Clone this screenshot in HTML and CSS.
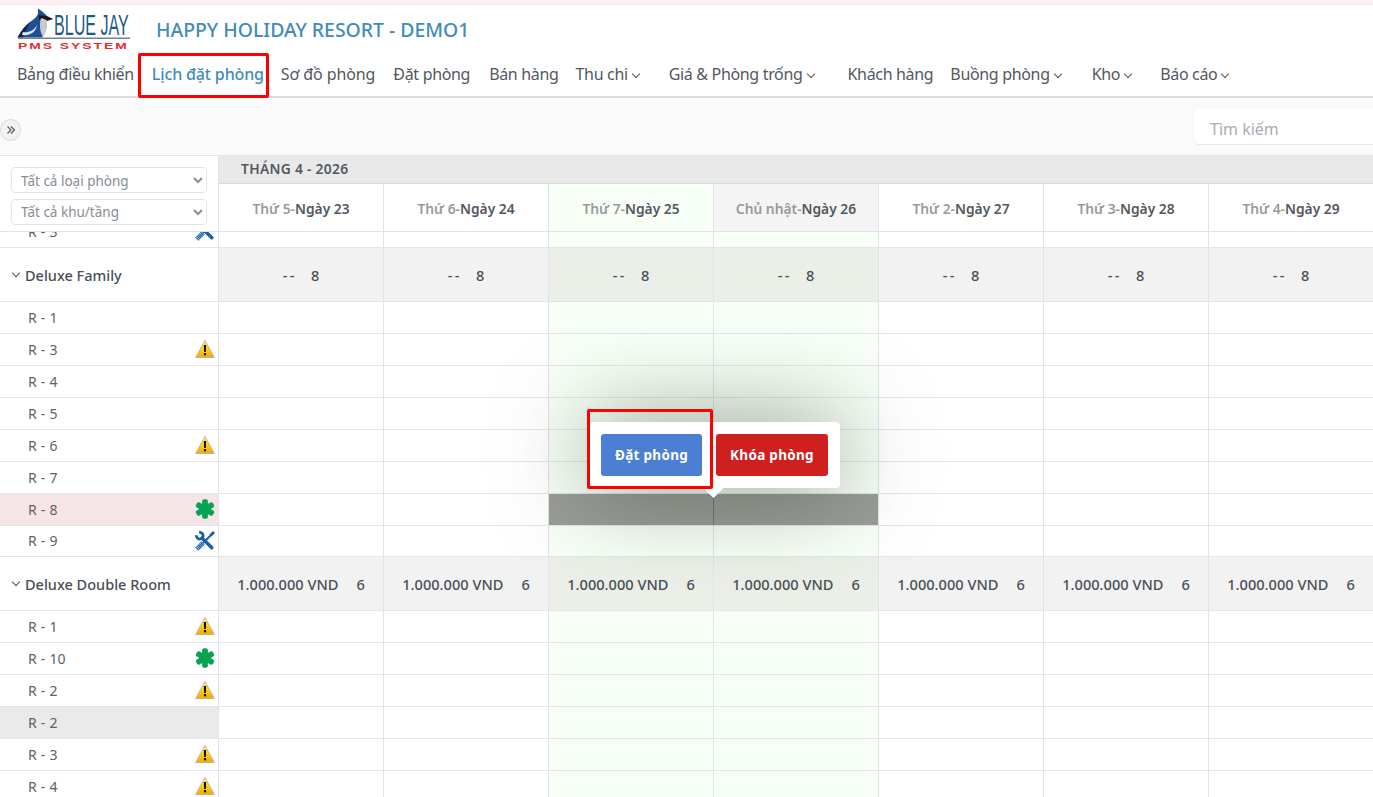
FILE: index.html
```html
<!DOCTYPE html>
<html lang="vi">
<head>
<meta charset="utf-8">
<title>Lịch đặt phòng</title>
<link rel="stylesheet" href="styles.css">
</head>
<body>
<svg class="defs" width="0" height="0" aria-hidden="true">
  <defs>
    <linearGradient id="warnFill" x1="0" y1="0" x2="0" y2="1">
      <stop offset="0" stop-color="#fbf3c8"/><stop offset=".4" stop-color="#ffd81e"/><stop offset="1" stop-color="#f5a800"/>
    </linearGradient>
    <symbol id="warn" viewBox="0 0 20 20">
      <path d="M10 1.500 L19.300 18.500 H.7 Z" fill="url(#warnFill)" stroke="#bdb39c" stroke-width="1" stroke-linejoin="round"/>
      <path d="M8.800 6h2.400l-.4 7H9.200Z" fill="#111"/><rect x="8.900" y="14" width="2.200" height="2.300" fill="#111"/>
    </symbol>
    <symbol id="star" viewBox="0 0 20 20">
      <g fill="#08a352">
        <rect x="7.100" y=".2" width="5.800" height="19.600" rx="2"/>
        <rect x="7.100" y=".2" width="5.800" height="19.600" rx="2" transform="rotate(60 10 10)"/>
        <rect x="7.100" y=".2" width="5.800" height="19.600" rx="2" transform="rotate(120 10 10)"/>
      </g>
    </symbol>
    <symbol id="tool" viewBox="0 0 20 20">
      <g fill="none" stroke="#185fa8">
        <path d="M8 12 L16 4" stroke-width="1.900"/>
        <path d="M15.500 4.500 L19 1" stroke-width="2.800"/>
        <path d="M1.800 18.200 L8.200 11.800" stroke-width="4.600" stroke-dasharray="1.300 .4"/>
        <path d="M7 7 L16.800 16.800" stroke-width="3.400" stroke-linecap="round"/>
        <path d="M4.230 1.550 A3.300 3.300 0 1 1 1.550 4.230" stroke-width="2.800"/>
      </g>
    </symbol>
  </defs>
</svg>
<header class="top">
  <div class="brand">
    <svg class="logo" viewBox="0 0 115 45" width="115" height="45" role="img" aria-label="Blue Jay PMS System">
      <path d="M1.500 32.500 C5 26 9 21 14 17 C18 14 21 12 22 9 L22 3.500 L27 7 C28 8 30 10 31 11 L37 14 L31 16 C31 22 30 28 26 32.500Z" fill="#1c4f93"/>
      <path d="M1.500 32.500 C5 26 9 21 14 17 L10 25 C8 28 7 30 7 32.500Z" fill="#16243f"/>
      <path d="M25 13 L31 14 L31 17 C31 23 30 28 27 32 C24 27 23 20 25 13Z" fill="#c8cbce"/>
      <path d="M23 10 L30 11 L37 14 L31 15.500 L26 13 L23 15Z" fill="#1a1a1a"/>
      <path d="M7 27 C12 28 18 26 21 20 C20 27 14 31 6 30Z" fill="#dfe8f4"/>
      <text class="logo-name" transform="translate(38 30) scale(.536 1)">BLUE JAY</text>
      <rect x="2" y="32.500" width="112" height="1.500" fill="#7a8288"/>
      <text class="logo-sub" transform="translate(2 43.500) scale(1.540 1)">PMS SYSTEM</text>
    </svg>
    <h1 class="hotel">HAPPY HOLIDAY RESORT - DEMO1</h1>
  </div>
  <nav class="nav">
    <a class="n1">Bảng điều khiển</a>
    <a class="n2 active">Lịch đặt phòng</a>
    <a class="n3">Sơ đồ phòng</a>
    <a class="n4">Đặt phòng</a>
    <a class="n5">Bán hàng</a>
    <a class="n6 dd">Thu chi</a>
    <a class="n7 dd">Giá &amp; Phòng trống</a>
    <a class="n8">Khách hàng</a>
    <a class="n9 dd">Buồng phòng</a>
    <a class="n10 dd">Kho</a>
    <a class="n11 dd">Báo cáo</a>
  </nav>
</header>
<section class="toolbar">
  <button class="collapse" type="button" aria-label="Mở rộng">
    <svg width="10" height="10" viewBox="0 0 10 10"><path d="M1.500 1.500 5 5 1.500 8.500M5 1.500 8.500 5 5 8.500" fill="none" stroke="#555" stroke-width="1.100"/></svg>
  </button>
  <input class="search" type="text" placeholder="Tìm kiếm">
</section>
<main class="cal">
  <div class="cal-head">
    <div class="filters">
      <select class="filter"><option>Tất cả loại phòng</option></select>
      <select class="filter"><option>Tất cả khu/tầng</option></select>
    </div>
    <div class="head-right">
      <div class="month">THÁNG 4 - 2026</div>
      <div class="days">
        <div class="day"><span>Thứ 5-</span><b>Ngày 23</b></div>
        <div class="day"><span>Thứ 6-</span><b>Ngày 24</b></div>
        <div class="day sat"><span>Thứ 7-</span><b>Ngày 25</b></div>
        <div class="day sun"><span>Chủ nhật-</span><b>Ngày 26</b></div>
        <div class="day"><span>Thứ 2-</span><b>Ngày 27</b></div>
        <div class="day"><span>Thứ 3-</span><b>Ngày 28</b></div>
        <div class="day"><span>Thứ 4-</span><b>Ngày 29</b></div>
      </div>
    </div>
  </div>
  <div class="body">
    <div class="row clipped"><div class="room">R - 3<svg class="ico"><use href="#tool"/></svg></div><i></i><i></i><i></i><i></i><i></i><i></i><i></i></div>
    <div class="row group"><div class="room">Deluxe Family</div><i><em class="dash">--</em><em>8</em></i><i><em class="dash">--</em><em>8</em></i><i><em class="dash">--</em><em>8</em></i><i><em class="dash">--</em><em>8</em></i><i><em class="dash">--</em><em>8</em></i><i><em class="dash">--</em><em>8</em></i><i><em class="dash">--</em><em>8</em></i></div>
    <div class="row"><div class="room">R - 1</div><i></i><i></i><i></i><i></i><i></i><i></i><i></i></div>
    <div class="row"><div class="room">R - 3<svg class="ico"><use href="#warn"/></svg></div><i></i><i></i><i></i><i></i><i></i><i></i><i></i></div>
    <div class="row"><div class="room">R - 4</div><i></i><i></i><i></i><i></i><i></i><i></i><i></i></div>
    <div class="row"><div class="room">R - 5</div><i></i><i></i><i></i><i></i><i></i><i></i><i></i></div>
    <div class="row"><div class="room">R - 6<svg class="ico"><use href="#warn"/></svg></div><i></i><i></i><i></i><i></i><i></i><i></i><i></i></div>
    <div class="row"><div class="room">R - 7</div><i></i><i></i><i></i><i></i><i></i><i></i><i></i></div>
    <div class="row picked"><div class="room">R - 8<svg class="ico"><use href="#star"/></svg></div><i></i><i></i><i></i><i></i><i></i><i></i><i></i></div>
    <div class="row short"><div class="room">R - 9<svg class="ico"><use href="#tool"/></svg></div><i></i><i></i><i></i><i></i><i></i><i></i><i></i></div>
    <div class="row group"><div class="room">Deluxe Double Room</div><i><em>1.000.000 VND</em><em>6</em></i><i><em>1.000.000 VND</em><em>6</em></i><i><em>1.000.000 VND</em><em>6</em></i><i><em>1.000.000 VND</em><em>6</em></i><i><em>1.000.000 VND</em><em>6</em></i><i><em>1.000.000 VND</em><em>6</em></i><i><em>1.000.000 VND</em><em>6</em></i></div>
    <div class="row"><div class="room">R - 1<svg class="ico"><use href="#warn"/></svg></div><i></i><i></i><i></i><i></i><i></i><i></i><i></i></div>
    <div class="row"><div class="room">R - 10<svg class="ico"><use href="#star"/></svg></div><i></i><i></i><i></i><i></i><i></i><i></i><i></i></div>
    <div class="row"><div class="room">R - 2<svg class="ico"><use href="#warn"/></svg></div><i></i><i></i><i></i><i></i><i></i><i></i><i></i></div>
    <div class="row locked"><div class="room">R - 2</div><i></i><i></i><i></i><i></i><i></i><i></i><i></i></div>
    <div class="row"><div class="room">R - 3<svg class="ico"><use href="#warn"/></svg></div><i></i><i></i><i></i><i></i><i></i><i></i><i></i></div>
    <div class="row"><div class="room">R - 4<svg class="ico"><use href="#warn"/></svg></div><i></i><i></i><i></i><i></i><i></i><i></i><i></i></div>
  </div>
</main>
<div class="popover">
  <button class="btn blue" type="button">Đặt phòng</button>
  <button class="btn red" type="button">Khóa phòng</button>
</div>
<div class="mark mark-nav"></div>
<div class="mark mark-btn"></div>
</body>
</html>
```
FILE: styles.css
```css
* { box-sizing: border-box; }
html, body { margin: 0; height: 100%; }
body {
  position: relative;
  width: 1373px;
  height: 797px;
  overflow: hidden;
  background: #fff;
  color: #495057;
  font-family: "Noto Sans", "Open Sans", sans-serif;
}
.defs { position: absolute; }

/* header */
.top {
  height: 98px;
  border-top: 4px solid #fdf0f4;
  border-bottom: 2px solid #dcdcdc;
  box-shadow: inset 0 1px 0 #f3e4ea;
}
.brand { display: flex; align-items: flex-start; height: 47px; padding: 1px 0 0 16px; }
.logo { display: block; overflow: visible; flex: none; }
.logo-name { font-family: "Liberation Sans", sans-serif; font-size: 30px; fill: #1d5a85; }
.logo-sub { font-family: "Liberation Sans", sans-serif; font-size: 9px; font-weight: 700; letter-spacing: 1.300px; fill: #e32d2d; }
.hotel { margin: 15px 0 0 25px; font-size: 19.400px; font-weight: 500; color: #428bba; line-height: 1; }
.nav { display: flex; align-items: center; height: 45px; font-size: 16px; letter-spacing: -.33px; }
.nav a { color: #52585e; white-space: nowrap; }
.nav a.active { color: #3f8bb9; font-weight: 500; letter-spacing: -.15px; }
.dd::after {
  content: "";
  display: inline-block;
  width: 5px; height: 5px;
  margin: 0 2px 3px 5px;
  border-right: 1px solid #555;
  border-bottom: 1px solid #555;
  transform: rotate(45deg);
}
.n1 { margin-left: 17px; }
.n2 { margin-left: 18px; }
.n3 { margin-left: 17px; letter-spacing: -.1px; }
.n4 { margin-left: 18px; }
.n5 { margin-left: 19px; }
.n6 { margin-left: 17px; }
.n7 { margin-left: 28px; }
.n8 { margin-left: 32px; }
.n9 { margin-left: 17px; }
.n10 { margin-left: 29px; }
.n11 { margin-left: 27px; }

/* toolbar */
.toolbar {
  display: flex; align-items: flex-start; justify-content: space-between;
  height: 58px;
  background: #fafafa;
  border-bottom: 1px solid #e2e5ec;
}
.collapse {
  display: flex; align-items: center; justify-content: center;
  width: 21px; height: 22px; padding: 0; margin: 21px 0 0 0;
  border: 1px solid #dedede; border-radius: 50%;
  background: #f2f2f2;
}
.search {
  width: 178px; height: 36px; margin-top: 11px; padding: 4px 15px 0;
  border: 0; border-bottom: 1px solid #e6e8ee; border-radius: 4px 0 0 4px;
  background: #fff; font: 16px "Noto Sans", sans-serif; color: #555;
}
.search::placeholder { color: #a8adb3; opacity: 1; }

/* calendar */
.cal { height: 641px; overflow: hidden; }
.cal-head { display: flex; height: 75px; }
.filters {
  flex: 0 0 219px;
  display: flex; flex-direction: column; gap: 6px;
  padding: 11px 11px 0;
  border-right: 1px solid #dfe3ea;
}
.filter {
  width: 196px; height: 26px; padding: 0 5px;
  border: 1px solid #dfe3ea; border-radius: 4px;
  background: #fff; color: #868e96;
  font: 13.500px "Noto Sans", sans-serif;
}
.filter:first-child { padding-top: 2px; }
.head-right { flex: 1; min-width: 0; }
.month {
  height: 28px; padding-left: 22px; line-height: 26px;
  background: #e9e9e9; border-bottom: 1px solid #dadada;
  font-size: 13.800px; font-weight: 600; letter-spacing: .3px; color: #52585e;
}
.days { display: grid; grid-template-columns: repeat(7, 165px); height: 47px; }
.day {
  display: flex; align-items: center; justify-content: center;
  padding-top: 1px;
  border-right: 1px solid #dfe3ea;
  font-size: 13.800px; font-weight: 600; color: #52585e;
}
.day span { color: #98999c; }
.day b { font-weight: 600; }
.day.sat { background: #f7fff6; }
.day.sun { background: #f4f4f5; }
.body { border-top: 1px solid #dfe3ea; overflow: hidden; height: 566px; }
.row {
  display: grid; grid-template-columns: 219px repeat(7, 165px);
  height: 32px;
  border-bottom: 1px solid #e2e5ea;
}
.short { height: 31px; }
.row > i { display: flex; align-items: center; justify-content: center; gap: 18px; border-right: 1px solid #dfe3ea; font-style: normal; }
.row > i:nth-child(4), .row > i:nth-child(5) { background: #f7fff6; }
.row > i em { font-style: normal; }
.row > i em.dash { letter-spacing: 2.500px; margin-right: -4px; }
.room {
  display: flex; align-items: center; justify-content: space-between;
  padding: 0 3px 1px 28px;
  border-right: 1px solid #dfe3ea;
  font-size: 14px; word-spacing: .5px; color: #5b6268;
}
.ico { width: 20px; height: 20px; display: block; }
.clipped { margin-top: -16px; height: 32px; }
.group { height: 54px; }
.group .room { padding: 0 3px 0 25px; font-size: 14.500px; word-spacing: 0; font-weight: 500; color: #495057; position: relative; }
.group .room::before {
  content: ""; position: absolute; left: 13px; top: 22px;
  width: 5px; height: 5px;
  border-right: 1px solid #555; border-bottom: 1px solid #555;
  transform: rotate(45deg);
}
.group > i { background: #f2f2f2; font-size: 14.600px; font-weight: 500; color: #495057; }
.group > i:nth-child(4), .group > i:nth-child(5) { background: #ebefe8; }
.picked .room { background: #f6e5e6; }
.picked > i:nth-child(4), .picked > i:nth-child(5) { background: #9a9c98; border-right-color: #70726e; }
.picked > i:nth-child(5) { border-right-color: #dfe3ea; }
.locked .room { background: #eaeaea; }

/* popover over the grid */
.popover {
  position: absolute; left: 590px; top: 422px;
  display: flex; gap: 14px;
  padding: 12px 12px 12px 11px;
  background: #fff; border-radius: 4px;
  box-shadow: 0 0 90px rgba(50, 60, 40, .55);
}
.popover::after {
  content: ""; position: absolute; left: 116px; bottom: -7px;
  width: 15px; height: 15px; background: #fff;
  transform: rotate(45deg);
}
.btn {
  height: 42px; padding: 0; border: 0; border-radius: 3px;
  color: #fff; font: 700 13.500px "Noto Sans", sans-serif; letter-spacing: .3px;
}
.blue { width: 101px; background: #4a7fd3; position: relative; z-index: 1; }
.red { width: 112px; background: #cf2020; position: relative; z-index: 1; }

/* annotation frames */
.mark { position: absolute; border: 3px solid #f00; border-radius: 2px; }
.mark-nav { left: 138px; top: 53px; width: 131px; height: 45px; }
.mark-btn { left: 587px; top: 409px; width: 126px; height: 80px; }
```
